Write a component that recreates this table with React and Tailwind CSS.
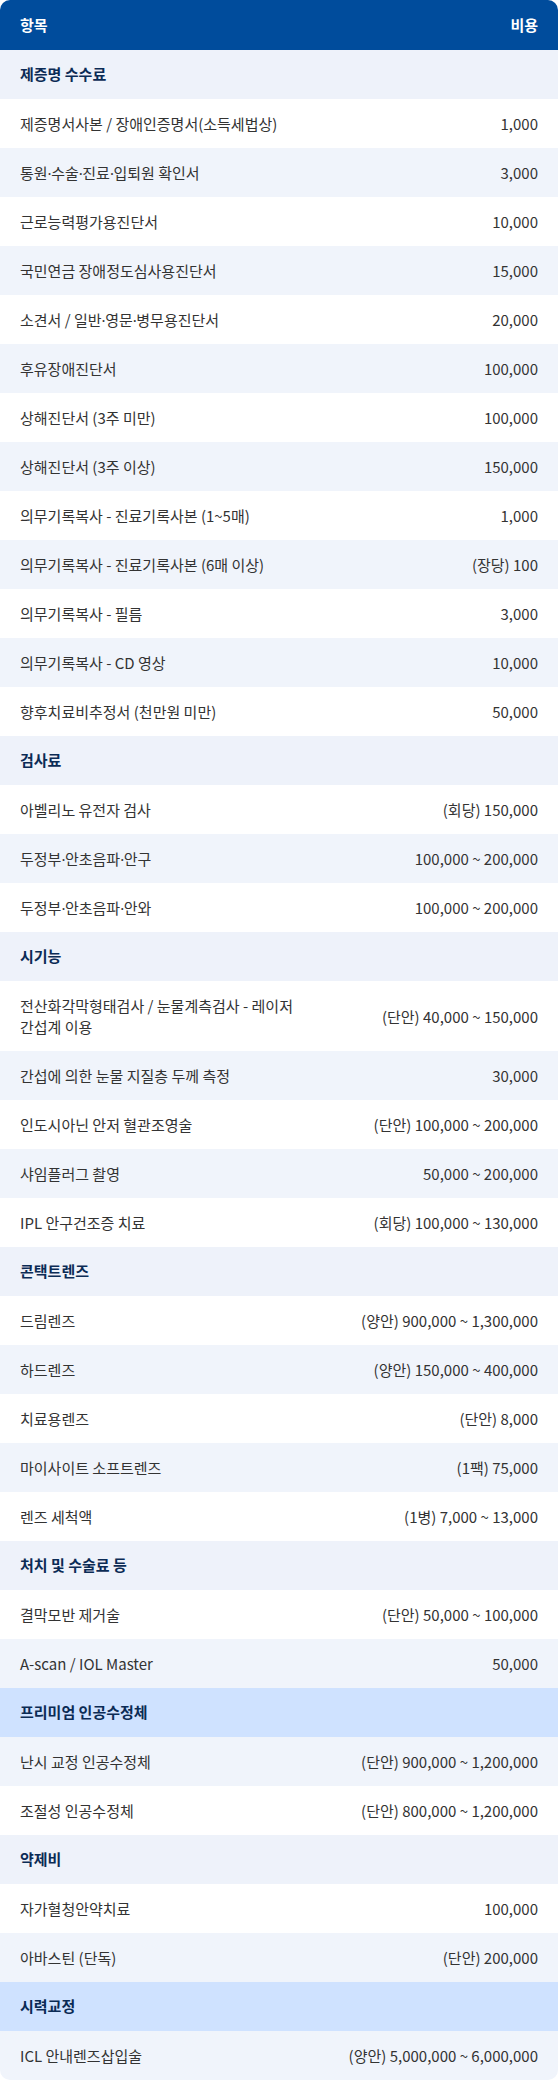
import React from "react";

const rows = [
  { s: "제증명 수수료", bg: "bg-[#eef2fa]" },
  { n: "제증명서사본 / 장애인증명서(소득세법상)", v: "1,000" },
  { n: "통원·수술·진료·입퇴원 확인서", v: "3,000" },
  { n: "근로능력평가용진단서", v: "10,000" },
  { n: "국민연금 장애정도심사용진단서", v: "15,000" },
  { n: "소견서 / 일반·영문·병무용진단서", v: "20,000" },
  { n: "후유장애진단서", v: "100,000" },
  { n: "상해진단서 (3주 미만)", v: "100,000" },
  { n: "상해진단서 (3주 이상)", v: "150,000" },
  { n: "의무기록복사 - 진료기록사본 (1~5매)", v: "1,000" },
  { n: "의무기록복사 - 진료기록사본 (6매 이상)", v: "(장당) 100" },
  { n: "의무기록복사 - 필름", v: "3,000" },
  { n: "의무기록복사 - CD 영상", v: "10,000" },
  { n: "향후치료비추정서 (천만원 미만)", v: "50,000" },
  { s: "검사료", bg: "bg-[#eef2fa]" },
  { n: "아벨리노 유전자 검사", v: "(회당) 150,000" },
  { n: "두정부·안초음파·안구", v: "100,000 ~ 200,000" },
  { n: "두정부·안초음파·안와", v: "100,000 ~ 200,000" },
  { s: "시기능", bg: "bg-[#eef2fa]" },
  { n: ["전산화각막형태검사 / 눈물계측검사 - 레이저", "간섭계 이용"], v: "(단안) 40,000 ~ 150,000" },
  { n: "간섭에 의한 눈물 지질층 두께 측정", v: "30,000" },
  { n: "인도시아닌 안저 혈관조영술", v: "(단안) 100,000 ~ 200,000" },
  { n: "샤임플러그 촬영", v: "50,000 ~ 200,000" },
  { n: "IPL 안구건조증 치료", v: "(회당) 100,000 ~ 130,000" },
  { s: "콘택트렌즈", bg: "bg-[#eef2fa]" },
  { n: "드림렌즈", v: "(양안) 900,000 ~ 1,300,000" },
  { n: "하드렌즈", v: "(양안) 150,000 ~ 400,000" },
  { n: "치료용렌즈", v: "(단안) 8,000" },
  { n: "마이사이트 소프트렌즈", v: "(1팩) 75,000" },
  { n: "렌즈 세척액", v: "(1병) 7,000 ~ 13,000" },
  { s: "처치 및 수술료 등", bg: "bg-[#eef2fa]" },
  { n: "결막모반 제거술", v: "(단안) 50,000 ~ 100,000" },
  { n: "A-scan / IOL Master", v: "50,000" },
  { s: "프리미엄 인공수정체", bg: "bg-[#cfe2ff]" },
  { n: "난시 교정 인공수정체", v: "(단안) 900,000 ~ 1,200,000" },
  { n: "조절성 인공수정체", v: "(단안) 800,000 ~ 1,200,000" },
  { s: "약제비", bg: "bg-[#eef2fa]" },
  { n: "자가혈청안약치료", v: "100,000" },
  { n: "아바스틴 (단독)", v: "(단안) 200,000" },
  { s: "시력교정", bg: "bg-[#cfe2ff]" },
  { n: "ICL 안내렌즈삽입술", v: "(양안) 5,000,000 ~ 6,000,000" },
];

const font = { fontFamily: '"Noto Sans CJK KR", "Noto Sans", sans-serif' };

function Dotted({ text }) {
  const parts = text.split("·");
  return (
    <>
      {parts.map((p, i) => (
        <React.Fragment key={i}>
          {i > 0 && (
            <span className="font-['Noto_Sans',sans-serif] tracking-[-0.5px]">·</span>
          )}
          {p}
        </React.Fragment>
      ))}
    </>
  );
}

export default function App() {
  return (
    <div className="w-[558px] bg-white" style={font}>
      <div className="rounded-[10px] overflow-hidden">
        <div className="flex items-center justify-between h-[50px] px-5 bg-[#004c9c] text-white font-bold text-[15px]">
          <span>항목</span>
          <span>비용</span>
        </div>
        {rows.map((r, i) => {
          const odd = i % 2 === 0;
          if (r.s) {
            return (
              <div
                key={i}
                className={`flex items-center h-[49px] px-5 ${r.bg} text-[#0b2b55] font-bold text-[15px]`}
              >
                {r.s}
              </div>
            );
          }
          const bg = odd ? "bg-[#f0f4fb]" : "bg-white";
          const multi = Array.isArray(r.n);
          return (
            <div
              key={i}
              className={`flex items-center justify-between ${multi ? "h-[70px]" : "h-[49px]"} px-5 ${bg} text-[#333333] text-[15px] leading-[21px]`}
            >
              <span>
                {multi ? (
                  <>
                    {r.n[0]}
                    <br />
                    {r.n[1]}
                  </>
                ) : (
                  <Dotted text={r.n} />
                )}
              </span>
              <span className="text-right whitespace-nowrap">{r.v}</span>
            </div>
          );
        })}
      </div>
    </div>
  );
}
